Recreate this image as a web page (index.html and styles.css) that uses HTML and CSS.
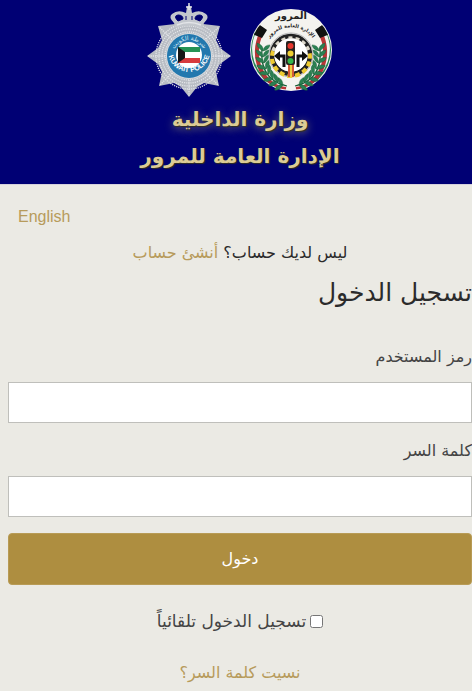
FILE: index.html
```html
<!DOCTYPE html>
<html lang="ar" dir="rtl">

<head>
    <meta charset="UTF-8">
    <meta name="viewport" content="width=device-width, initial-scale=1.0">
    <title>تسجيل الدخول</title>
    <link rel="stylesheet" href="styles.css">
</head>

<body>
    <header class="header">
        <div class="logos">
            <svg class="logo-traffic" viewBox="9 10 84 84" role="img" aria-label="الإدارة العامة للمرور">
                <defs>
                    <clipPath id="sealClip"><circle cx="51" cy="52" r="40"/></clipPath>
                    <path id="sealTop" d="M25 49 A27 27 0 0 1 77 49"/>
                    <path id="leaf" d="M0 0 Q-7 -2 -7 -7 Q0 -6 0 0 Q0 -6 6 -7 Q6 -2 0 0"/>
                    <g id="wreath" fill="#2a8052" stroke="#145c33" stroke-width="0.4">
                        <path d="M47 88 Q19 82 22 50" fill="none" stroke-width="1.2"/>
                        <use href="#leaf" transform="translate(43 87) rotate(-75)"/>
                        <use href="#leaf" transform="translate(38 84) rotate(-66)"/>
                        <use href="#leaf" transform="translate(33 81) rotate(-52)"/>
                        <use href="#leaf" transform="translate(29 76) rotate(-38)"/>
                        <use href="#leaf" transform="translate(26 71) rotate(-24)"/>
                        <use href="#leaf" transform="translate(24 65) rotate(-12)"/>
                        <use href="#leaf" transform="translate(23 59) rotate(0)"/>
                        <use href="#leaf" transform="translate(23 53) rotate(8)"/>
                    </g>
                </defs>
                <circle cx="51" cy="52" r="41" fill="#f4f3ef"/>
                <g clip-path="url(#sealClip)">
                    <path d="M15 31 A41 41 0 0 0 35 89" fill="none" stroke="#258553" stroke-width="5"/>
                    <path d="M21 36 A32 37 0 0 0 46 91" fill="none" stroke="#b93537" stroke-width="4"/>
                    <path d="M87 31 A41 41 0 0 1 67 89" fill="none" stroke="#258553" stroke-width="5"/>
                    <path d="M81 36 A32 37 0 0 1 56 91" fill="none" stroke="#b93537" stroke-width="4"/>
                    <path d="M17 25 L27 32 L22 40 L12 36 Z M85 25 L75 32 L80 40 L90 36 Z" fill="#111"/>
                </g>
                <circle cx="51" cy="55" r="28" fill="#f4f3ef"/>
                <use href="#wreath"/>
                <use href="#wreath" transform="translate(102 0) scale(-1 1)"/>
                <circle cx="51" cy="57" r="22" fill="#fff" stroke="#888" stroke-width="0.6"/>
                <circle cx="51" cy="57" r="19" fill="none" stroke="#222" stroke-width="4.5"/>
                <path d="M33 53 A19 19 0 0 1 69 53" fill="none" stroke="#ddd8cb" stroke-width="3.5" stroke-dasharray="4 3"/>
                <path d="M33 53 A19 19 0 1 0 69 53" fill="none" stroke="#eecb32" stroke-width="4" stroke-dasharray="5 3"/>
                <circle cx="51" cy="57" r="16.5" fill="#fff"/>
                <path d="M44 69 V58 H39 M58 69 V58 H63" fill="none" stroke="#111" stroke-width="3"/>
                <path d="M40 53 L34 58 L40 63 Z M62 53 L68 58 L62 63 Z" fill="#111"/>
                <path d="M49 66 V79 M53 66 V79" stroke="#d45a35" stroke-width="2"/>
                <path d="M51 66 V79" stroke="#efcf42" stroke-width="2"/>
                <rect x="46" y="43" width="9" height="24" rx="2" fill="#282320"/>
                <circle cx="50.5" cy="48" r="3" fill="#e6372f"/>
                <circle cx="50.5" cy="55.5" r="3" fill="#efcf32"/>
                <circle cx="50.5" cy="63" r="3" fill="#35b64b"/>
                <text class="seal-title" x="51" y="21">المرور</text>
                <text class="seal-ring"><textPath href="#sealTop" startOffset="50%">الإدارة العامة للمرور</textPath></text>
            </svg>
            <svg class="logo-police" viewBox="7 3 84 96" role="img" aria-label="Kuwait Police">
                <defs>
                    <path id="policeTop" d="M33 57 A16 16 0 0 1 65 57"/>
                    <path id="policeBottom" d="M28 52 A21 21 0 1 0 70 52"/>
                </defs>
                <path d="M49 15 L55 22 L63 25 L80 27 L76 41 L80 49 L91 57 L80 65 L76 73 L79 87 L64 84 L57 88 L49 98 L41 88 L34 84 L19 87 L22 73 L18 65 L7 57 L18 49 L22 41 L18 27 L35 25 L43 22 Z" fill="#b9bdc4"/>
                <g fill="none" stroke="#e3e5e8" stroke-width="1.3" stroke-dasharray="1.2 1">
                    <circle cx="49" cy="57" r="24"/>
                    <circle cx="49" cy="57" r="27"/>
                    <circle cx="49" cy="57" r="30"/>
                    <circle cx="49" cy="57" r="33"/>
                    <path d="M73 57 H90 M25 57 H8 M49 81 V97 M66 40 L79 28 M32 40 L19 28 M66 74 L78 86 M32 74 L20 86"/>
                </g>
                <path d="M36 29 L34 24 Q28 18 32 15 Q38 10 46 14 L47 8 Q49 5 51 8 L52 14 Q60 10 66 15 Q70 18 64 24 L62 29 Q49 24 36 29 Z" fill="#c3c7cd"/>
                <path d="M38 22 Q33 17 38 16 Q43 16 43 20 Z M60 22 Q65 17 60 16 Q55 16 55 20 Z M46 17 V21 M52 17 V21" fill="#00006f" stroke="#00006f" stroke-width="1"/>
                <path d="M46 8 H52 M49 4 V11 M37 26 Q49 21 61 26" fill="none" stroke="#e3e5e8" stroke-width="1.5"/>
                <circle cx="49" cy="57" r="23" fill="#d7dade"/>
                <circle cx="49" cy="57" r="22" fill="#2378ae"/>
                <circle cx="49" cy="56" r="13" fill="#fff"/>
                <rect x="38" y="48" width="22" height="16" fill="#fff"/>
                <path d="M38 48 H60 V53 H38 Z" fill="#259355"/>
                <path d="M38 59 H60 V64 H38 Z" fill="#d63b3e"/>
                <path d="M38 48 L45 53 V59 L38 64 Z" fill="#161616"/>
                <text class="police-ring-ar"><textPath href="#policeTop" startOffset="50%">شرطة الكويت</textPath></text>
                <text class="police-ring"><textPath href="#policeBottom" startOffset="50%">KUWAIT POLICE</textPath></text>
            </svg>
        </div>
        <h1 class="ministry">وزارة الداخلية</h1>
        <h2 class="department">الإدارة العامة للمرور</h2>
    </header>

    <main class="content">
        <a class="language" href="#" lang="en">English</a>
        <p class="signup">ليس لديك حساب؟ <a href="#">أنشئ حساب</a></p>
        <form class="login">
            <h3>تسجيل الدخول</h3>
            <label for="username">رمز المستخدم</label>
            <input class="field" type="text" id="username">
            <label for="password">كلمة السر</label>
            <input class="field" type="password" id="password">
            <button type="submit">دخول</button>
            <div class="remember">
                <input type="checkbox" id="remember">
                <label for="remember">تسجيل الدخول تلقائياً</label>
            </div>
            <a class="forgot" href="#">نسيت كلمة السر؟</a>
        </form>
    </main>
</body>

</html>
```

FILE: styles.css
```css
* {
    box-sizing: border-box;
}

body {
    margin: 0;
    background: #ebeae4;
    color: #2b2b2b;
    font-family: 'DejaVu Sans', sans-serif;
    font-size: 16px;
    line-height: 24px;
}

a {
    color: #b79b5b;
    text-decoration: none;
}

a:hover {
    text-decoration: underline;
}

.header {
    background: #000074;
    border-bottom: 1px solid #d5d2dc;
    padding: 2px 0 9px 8px;
    text-align: center;
}

.logos {
    display: flex;
    justify-content: center;
    align-items: center;
    gap: 18px;
    margin-bottom: 3px;
}

.logo-traffic {
    width: 84px;
    height: 84px;
}

.logo-police {
    width: 84px;
    height: 96px;
}

.seal-title {
    font-size: 10px;
    font-weight: bold;
    text-anchor: middle;
    fill: #222;
}

.seal-ring {
    font-size: 5px;
    font-weight: bold;
    text-anchor: middle;
    fill: #222;
}

.police-ring {
    font-family: 'Liberation Sans', sans-serif;
    font-size: 7px;
    font-weight: bold;
    text-anchor: middle;
    direction: ltr;
    fill: #fff;
}

.police-ring-ar {
    font-size: 6px;
    text-anchor: middle;
    fill: #d9edf7;
}

.ministry,
.department {
    margin: 0;
    color: #dccb95;
    font-size: 20px;
    line-height: 37px;
    font-weight: bold;
    text-shadow: 1px 1px 1px #33301f;
}

.ministry {
    text-shadow: 1px 1px 1px #33301f, 0 2px 8px #77746c;
}

.content {
    display: flex;
    flex-direction: column;
    padding: 20px 0 4px 8px;
}

.language {
    align-self: flex-end;
    margin-left: 10px;
    font-family: 'Liberation Sans', sans-serif;
}

.signup {
    margin: 12px 0 10px;
    text-align: center;
}

.login {
    display: flex;
    flex-direction: column;
}

.login h3 {
    margin: 0 0 34px;
    font-size: 25px;
    line-height: 36px;
    font-weight: normal;
}

.login label {
    color: #444;
}

.field {
    width: 100%;
    height: 41px;
    margin: 13px 0 16px;
    padding: 8px;
    border: 1px solid #bfbfbb;
    background: #fff;
    font: inherit;
}

.login button {
    height: 52px;
    border: 1px solid #b89b55;
    border-radius: 4px;
    background: #ae8e40;
    color: #fff;
    font: inherit;
    cursor: pointer;
}

.remember {
    display: flex;
    justify-content: center;
    align-items: center;
    gap: 4px;
    margin: 24px 0 28px;
    font-size: 17px;
}

.remember input {
    width: 13px;
    height: 13px;
    margin: 0;
}

.forgot {
    align-self: center;
}
```
